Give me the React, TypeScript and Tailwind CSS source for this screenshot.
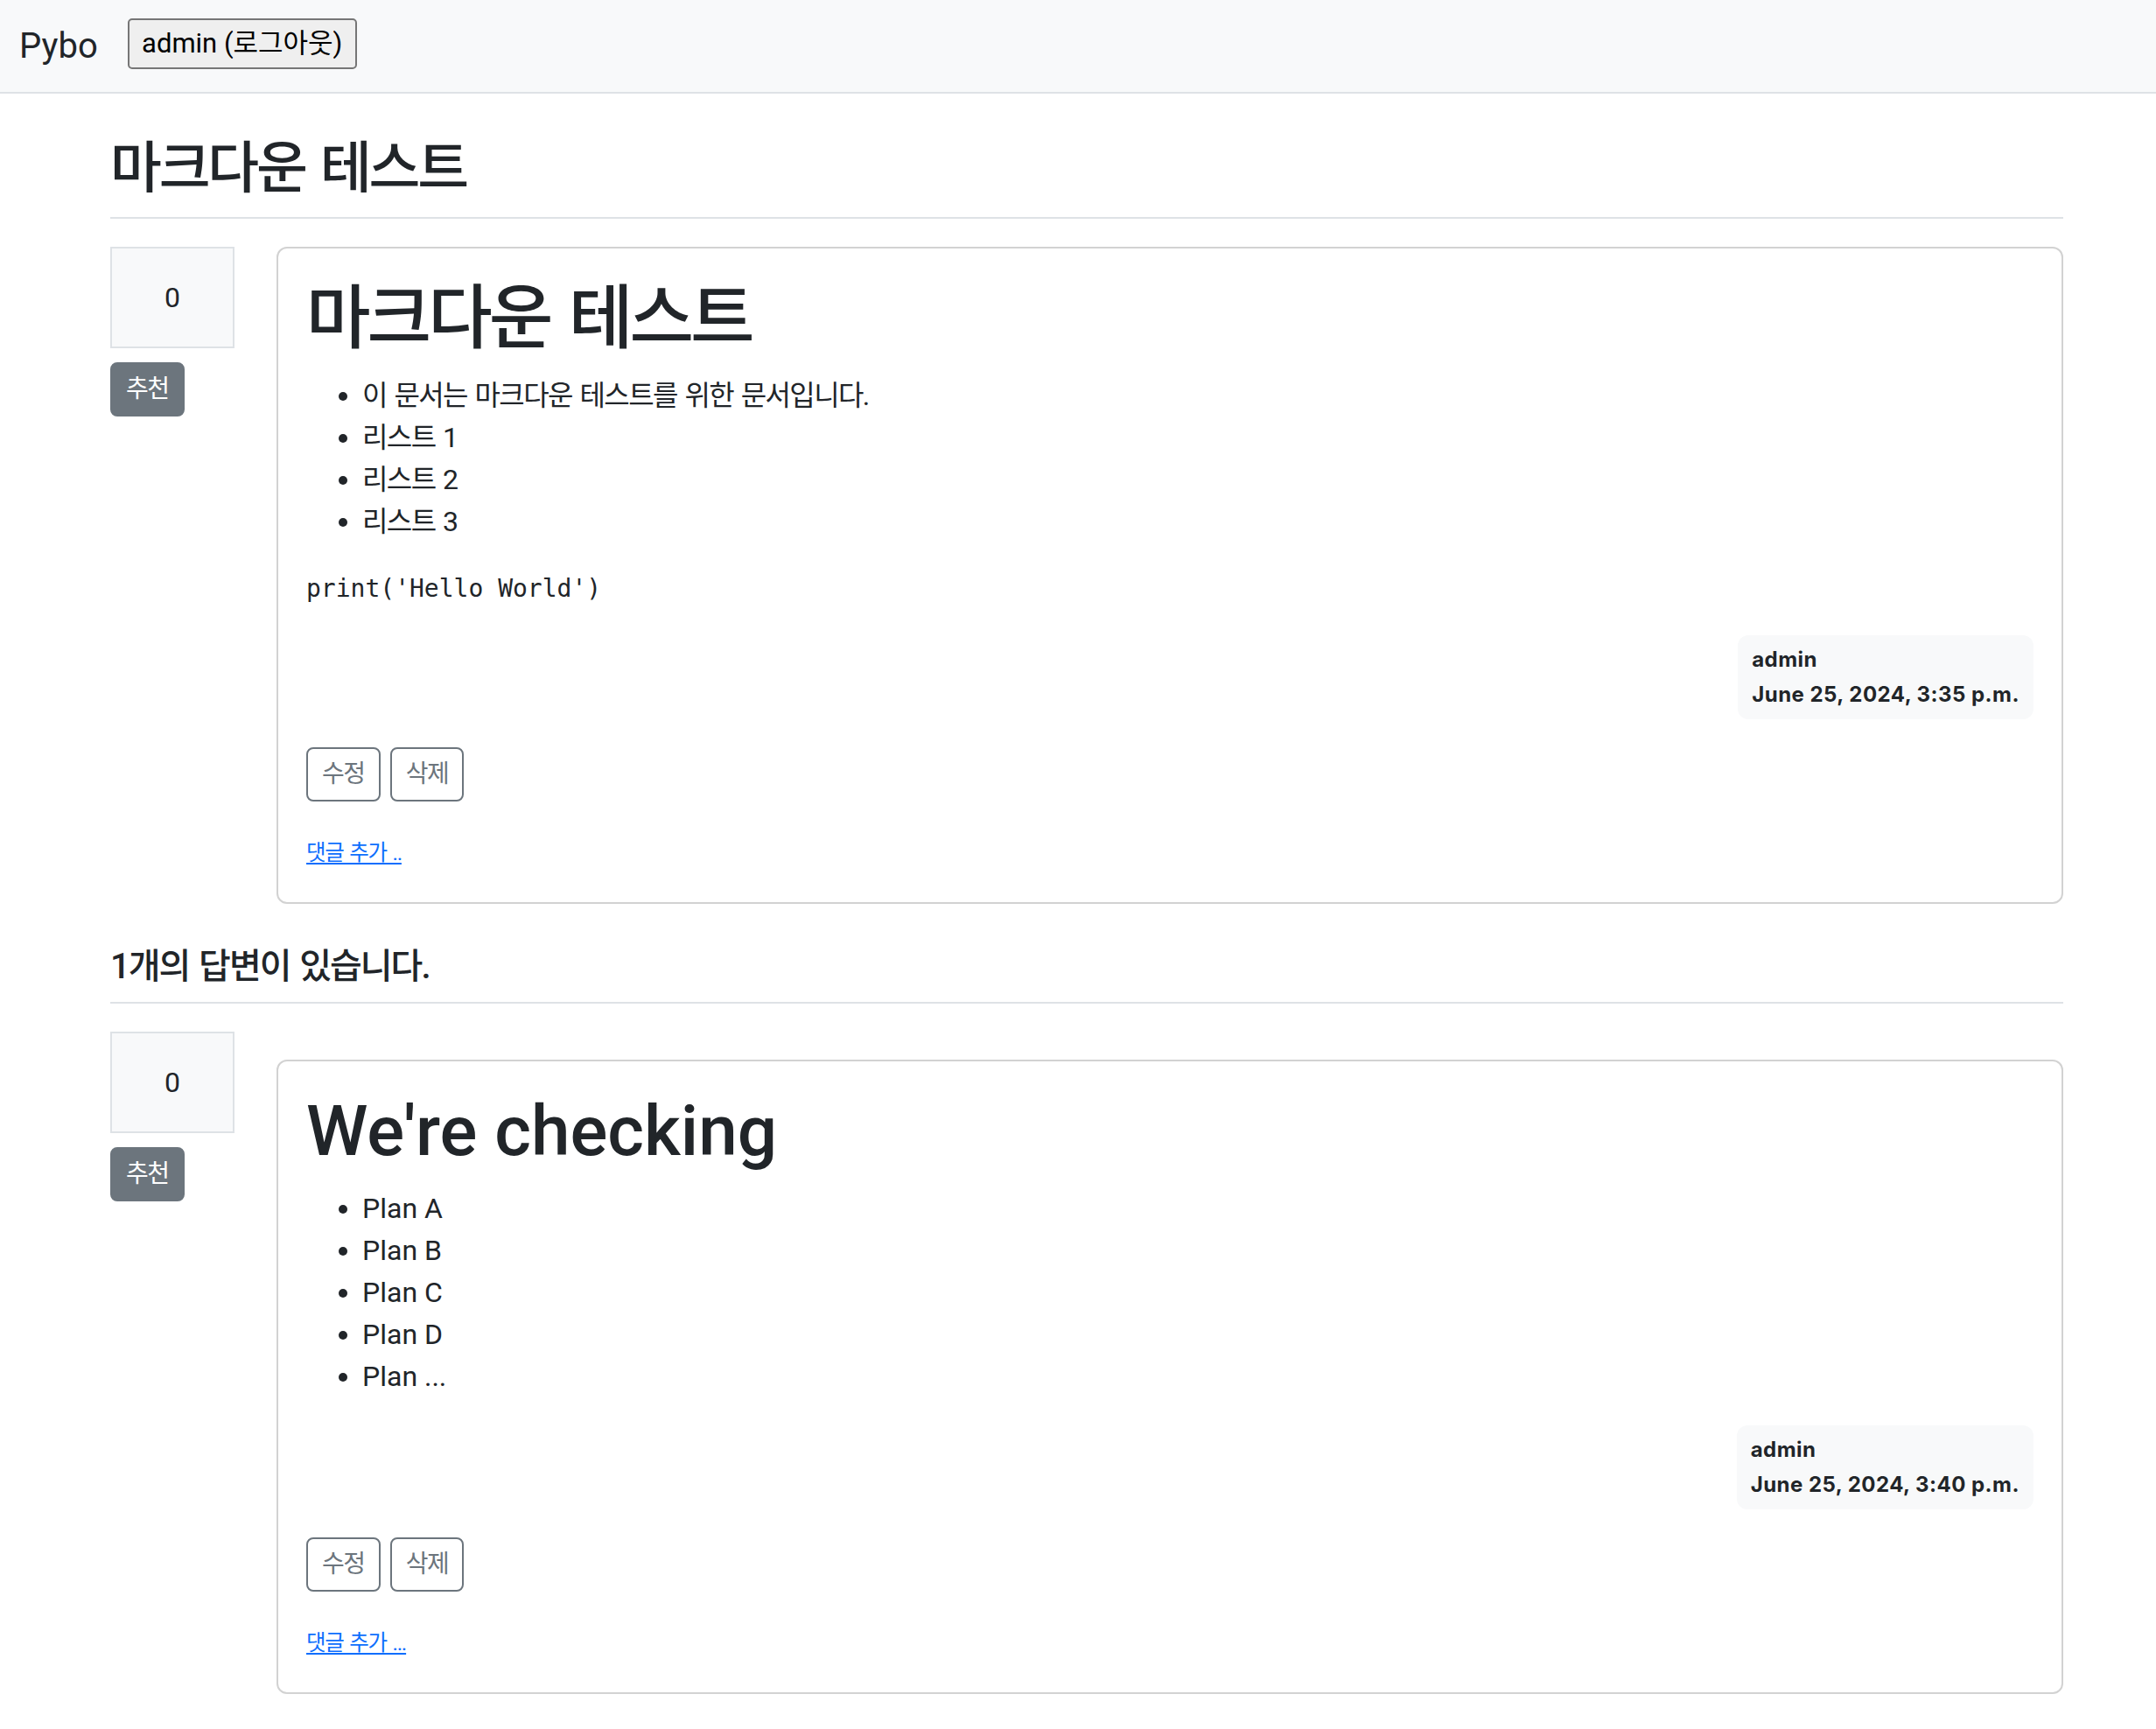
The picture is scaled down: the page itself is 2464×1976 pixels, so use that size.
import React from 'react';

// Pybo question detail page (Bootstrap look at 2x)

type Post = {
  title: string;
  items: string[];
  code?: string;
  author: string;
  date: string;
  commentLabel: string;
  answer?: boolean;
};

const QUESTION: Post = {
  title: '마크다운 테스트',
  items: ['이 문서는 마크다운 테스트를 위한 문서입니다.', '리스트 1', '리스트 2', '리스트 3'],
  code: "print('Hello World')",
  author: 'admin',
  date: 'June 25, 2024, 3:35 p.m.',
  commentLabel: '댓글 추가 ..',
};

const ANSWERS: Post[] = [
  {
    title: "We're checking",
    items: ['Plan A', 'Plan B', 'Plan C', 'Plan D', 'Plan ...'],
    author: 'admin',
    date: 'June 25, 2024, 3:40 p.m.',
    commentLabel: '댓글 추가 ...',
    answer: true,
  },
];

// hangul in the reference is narrower than Noto Sans CJK, so pull it in a bit
const hasHangul = (s: string) => /[\uac00-\ud7a3]/.test(s);
const KO = 'tracking-[-0.05em] [word-spacing:0.07em]';

const VoteColumn = () => (
  <div className="w-[142px] shrink-0">
    <div className="bg-[#f8f9fa] border-2 border-[#dee2e6] text-center p-[32px] leading-[48px]">0</div>
    <button className={`mt-[16px] block bg-[#6c757d] border-2 border-[#6c757d] text-white text-[28px] leading-[1.5] px-[16px] py-[8px] rounded-[8px] ${KO}`}>
      추천
    </button>
  </div>
);

const PostCard = ({ post }: { post: Post }) => (
  <div className={`flex-1 border-2 border-[#d2d2d2] rounded-[12px] p-[32px] ${post.answer ? 'mt-[32px]' : ''}`}>
    <h1 className={`text-[80px] font-medium leading-[1.2] mb-[16px] ${hasHangul(post.title) ? KO : ''}`}>
      {post.title}
    </h1>
    <ul className="list-disc pl-[64px] mb-[32px]">
      {post.items.map((item) => (
        <li key={item} className={`leading-[48px] ${hasHangul(item) ? KO : ''}`}>
          {item}
        </li>
      ))}
    </ul>
    {post.code && (
      <pre className="font-['DejaVu_Sans_Mono',monospace] text-[28px] leading-[42px] mb-[32px]">{post.code}</pre>
    )}
    <div className="flex justify-end">
      <div className="bg-[#f8f9fa] rounded-[12px] p-[16px] text-[24px] font-bold leading-none text-left font-['Inter','Roboto',sans-serif] tracking-[0.02em]">
        <div className="mb-[16px]">{post.author}</div>
        <div>{post.date}</div>
      </div>
    </div>
    <div className="my-[32px] flex gap-[11px]">
      <button className={`border-2 border-[#6c757d] text-[#6c757d] text-[28px] leading-[1.5] px-[16px] py-[8px] rounded-[8px] ${KO}`}>
        수정
      </button>
      <button className={`border-2 border-[#6c757d] text-[#6c757d] text-[28px] leading-[1.5] px-[16px] py-[8px] rounded-[8px] ${KO}`}>
        삭제
      </button>
    </div>
    <div className="leading-[48px]">
      <a href="#" className={`text-[24.5px] text-[#0d6efd] underline underline-offset-[3px] ${KO}`}>
        {post.commentLabel}
      </a>
    </div>
  </div>
);

export default function App() {
  return (
    <div className="min-h-screen bg-white text-[#212529] text-[32px] leading-[1.5] font-['Roboto','Noto_Sans_CJK_KR',sans-serif]">
      {/* Navbar */}
      <nav className="h-[107px] bg-[#f8f9fa] border-b-2 border-[#dee2e6] flex items-center pl-[22px]">
        <span className="text-[40px] leading-none">Pybo</span>
        <button className="ml-[34px] mb-[6px] w-[262px] h-[58px] bg-[#efefef] border-2 border-[#767676] rounded-[5px] text-[31px] leading-none text-black">
          admin (로그아웃)
        </button>
      </nav>

      <div className="w-[2232px] ml-[126px] pt-[32px] pb-[40px]">
        <h2 className={`text-[64px] font-medium leading-[1.2] py-[16px] border-b-2 border-[#dee2e6] ${KO}`}>
          {QUESTION.title}
        </h2>

        <div className="flex gap-[48px] mt-[32px] items-start">
          <VoteColumn />
          <PostCard post={QUESTION} />
        </div>

        <h5 className={`mt-[32px] text-[40px] font-medium leading-[1.2] py-[16px] border-b-2 border-[#dee2e6] ${KO}`}>
          {ANSWERS.length}개의 답변이 있습니다.
        </h5>

        {ANSWERS.map((answer, i) => (
          <div key={i} className="flex gap-[48px] mt-[32px] items-start">
            <VoteColumn />
            <PostCard post={answer} />
          </div>
        ))}
      </div>
    </div>
  );
}
